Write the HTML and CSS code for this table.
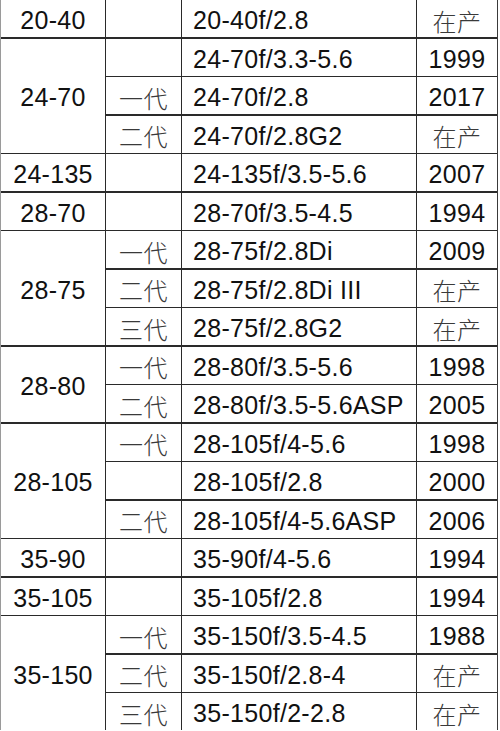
FILE: index.html
```html
<!DOCTYPE html>
<html lang="zh">
<head>
<meta charset="utf-8">
<title>镜头列表</title>
<link rel="stylesheet" href="styles.css">
</head>
<body>
<div class="table">
  <div class="c c1">20-40</div><div class="c c2"></div><div class="c c3">20-40f/2.8</div><div class="c c4 zh">在产</div>

  <div class="c c1 r3">24-70</div><div class="c c2"></div><div class="c c3">24-70f/3.3-5.6</div><div class="c c4">1999</div>
  <div class="c c2 zh">一代</div><div class="c c3">24-70f/2.8</div><div class="c c4">2017</div>
  <div class="c c2 zh">二代</div><div class="c c3">24-70f/2.8G2</div><div class="c c4 zh">在产</div>

  <div class="c c1">24-135</div><div class="c c2"></div><div class="c c3">24-135f/3.5-5.6</div><div class="c c4">2007</div>

  <div class="c c1">28-70</div><div class="c c2"></div><div class="c c3">28-70f/3.5-4.5</div><div class="c c4">1994</div>

  <div class="c c1 r3">28-75</div><div class="c c2 zh">一代</div><div class="c c3">28-75f/2.8Di</div><div class="c c4">2009</div>
  <div class="c c2 zh">二代</div><div class="c c3">28-75f/2.8Di III</div><div class="c c4 zh">在产</div>
  <div class="c c2 zh">三代</div><div class="c c3">28-75f/2.8G2</div><div class="c c4 zh">在产</div>

  <div class="c c1 r2">28-80</div><div class="c c2 zh">一代</div><div class="c c3">28-80f/3.5-5.6</div><div class="c c4">1998</div>
  <div class="c c2 zh">二代</div><div class="c c3">28-80f/3.5-5.6ASP</div><div class="c c4">2005</div>

  <div class="c c1 r3">28-105</div><div class="c c2 zh">一代</div><div class="c c3">28-105f/4-5.6</div><div class="c c4">1998</div>
  <div class="c c2"></div><div class="c c3">28-105f/2.8</div><div class="c c4">2000</div>
  <div class="c c2 zh">二代</div><div class="c c3">28-105f/4-5.6ASP</div><div class="c c4">2006</div>

  <div class="c c1">35-90</div><div class="c c2"></div><div class="c c3">35-90f/4-5.6</div><div class="c c4">1994</div>

  <div class="c c1">35-105</div><div class="c c2"></div><div class="c c3">35-105f/2.8</div><div class="c c4">1994</div>

  <div class="c c1 r3">35-150</div><div class="c c2 zh">一代</div><div class="c c3">35-150f/3.5-4.5</div><div class="c c4">1988</div>
  <div class="c c2 zh">二代</div><div class="c c3">35-150f/2.8-4</div><div class="c c4 zh">在产</div>
  <div class="c c2 zh">三代</div><div class="c c3">35-150f/2-2.8</div><div class="c c4 zh">在产</div>
</div>
</body>
</html>
```

FILE: styles.css
```css
html, body {
  margin: 0;
  padding: 0;
  background: #ffffff;
}

.table {
  width: 498px;
  box-sizing: border-box;
  display: grid;
  grid-template-columns: 104px 75px 234px 80px;
  grid-auto-rows: 37px;
  column-gap: 1px;
  row-gap: 1.5px;
  background: #2a2a2a;
  border-left: 1px solid #9a9a9a;
  border-right: 1px solid #3a3a3a;
  font-family: "Liberation Sans", Arial, "Noto Sans CJK SC", sans-serif;
  font-size: 25px;
  letter-spacing: 0.3px;
  color: #111111;
}

.c {
  background: #ffffff;
  display: flex;
  align-items: center;
  justify-content: center;
  padding-top: 4px;
  box-sizing: border-box;
  white-space: nowrap;
}

.c1 { grid-column: 1; }
.c2 { grid-column: 2; }
.c3 { grid-column: 3; justify-content: flex-start; padding-left: 11px; }
.c4 { grid-column: 4; }

.r2 { grid-row: span 2; }
.r3 { grid-row: span 3; }

.zh {
  font-family: "Noto Sans CJK SC", sans-serif;
  font-weight: 300;
  font-size: 24px;
  letter-spacing: 0.5px;
  color: #3a3a3a;
  padding-top: 3px;
}
```
